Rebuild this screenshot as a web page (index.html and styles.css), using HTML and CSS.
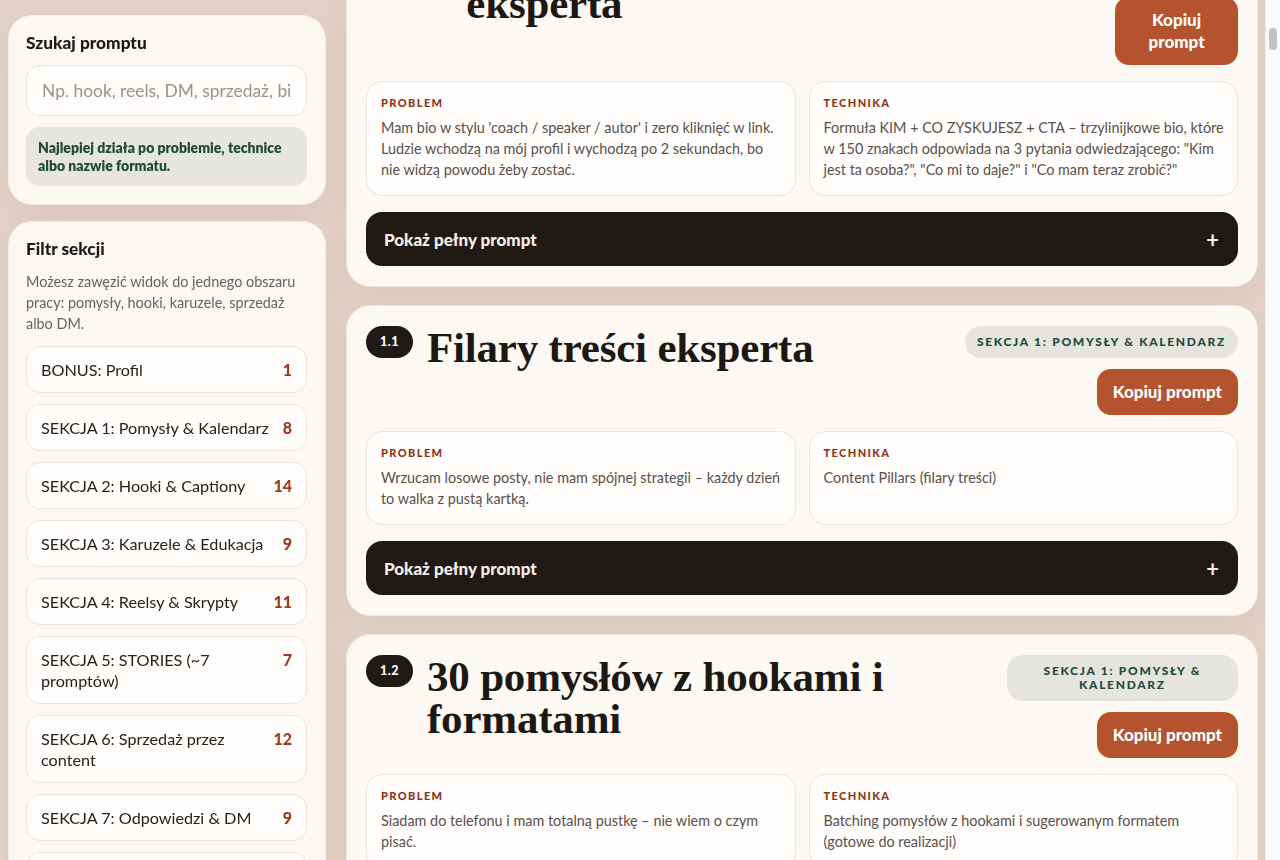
FILE: index.html
```html
<!DOCTYPE html>
<html lang="pl">
<head>
    <meta charset="UTF-8">
    <meta name="viewport" content="width=device-width, initial-scale=1.0">
    <title>Biblioteka promptów – Instagram eksperta</title>
    <link rel="stylesheet" href="styles.css">
</head>
<body>
    <div class="page" id="page">
        <div class="layout">
            <aside class="sidebar">
                <section class="panel">
                    <h3 class="panel-title">Szukaj promptu</h3>
                    <input class="search" type="text" placeholder="Np. hook, reels, DM, sprzedaż, bio">
                    <p class="hint">Najlepiej działa po problemie, technice albo nazwie formatu.</p>
                </section>

                <section class="panel">
                    <h3 class="panel-title">Filtr sekcji</h3>
                    <p class="panel-desc">Możesz zawęzić widok do jednego obszaru pracy: pomysły, hooki, karuzele, sprzedaż albo DM.</p>
                    <ul class="filters">
                        <li class="filter"><span>BONUS: Profil</span><b>1</b></li>
                        <li class="filter"><span>SEKCJA 1: Pomysły &amp; Kalendarz</span><b>8</b></li>
                        <li class="filter"><span>SEKCJA 2: Hooki &amp; Captiony</span><b>14</b></li>
                        <li class="filter"><span>SEKCJA 3: Karuzele &amp; Edukacja</span><b>9</b></li>
                        <li class="filter"><span>SEKCJA 4: Reelsy &amp; Skrypty</span><b>11</b></li>
                        <li class="filter"><span>SEKCJA 5: STORIES (~7 promptów)</span><b>7</b></li>
                        <li class="filter"><span>SEKCJA 6: Sprzedaż przez content</span><b>12</b></li>
                        <li class="filter"><span>SEKCJA 7: Odpowiedzi &amp; DM</span><b>9</b></li>
                        <li class="filter"><span>SEKCJA 8: Analiza &amp; Statystyki</span><b>6</b></li>
                    </ul>
                </section>
            </aside>

            <main class="prompts">
                <article class="prompt" id="prompt-bonus">
                    <header class="prompt-head">
                        <span class="prompt-no prompt-no-wide">BONUS</span>
                        <h2 class="prompt-title">Bio, które w sekundę pokazuje eksperta</h2>
                        <div class="prompt-meta">
                            <span class="tag">Bonus: Profil</span>
                            <button class="copy">Kopiuj prompt</button>
                        </div>
                    </header>
                    <div class="prompt-info">
                        <div class="info-box">
                            <h4 class="info-label">Problem</h4>
                            <p>Mam bio w stylu 'coach / speaker / autor' i zero kliknięć w link. Ludzie wchodzą na mój profil i wychodzą po 2 sekundach, bo nie widzą powodu żeby zostać.</p>
                        </div>
                        <div class="info-box">
                            <h4 class="info-label">Technika</h4>
                            <p>Formuła KIM + CO ZYSKUJESZ + CTA – trzylinijkowe bio, które w 150 znakach odpowiada na 3 pytania odwiedzającego: "Kim jest ta osoba?", "Co mi to daje?" i "Co mam teraz zrobić?"</p>
                        </div>
                    </div>
                    <button class="toggle"><span>Pokaż pełny prompt</span><span class="plus">+</span></button>
                </article>

                <article class="prompt" id="prompt-1-1">
                    <header class="prompt-head">
                        <span class="prompt-no">1.1</span>
                        <h2 class="prompt-title">Filary treści eksperta</h2>
                        <div class="prompt-meta">
                            <span class="tag">Sekcja 1: Pomysły &amp; Kalendarz</span>
                            <button class="copy">Kopiuj prompt</button>
                        </div>
                    </header>
                    <div class="prompt-info">
                        <div class="info-box">
                            <h4 class="info-label">Problem</h4>
                            <p>Wrzucam losowe posty, nie mam spójnej strategii – każdy dzień to walka z pustą kartką.</p>
                        </div>
                        <div class="info-box">
                            <h4 class="info-label">Technika</h4>
                            <p>Content Pillars (filary treści)</p>
                        </div>
                    </div>
                    <button class="toggle"><span>Pokaż pełny prompt</span><span class="plus">+</span></button>
                </article>

                <article class="prompt" id="prompt-1-2">
                    <header class="prompt-head">
                        <span class="prompt-no">1.2</span>
                        <h2 class="prompt-title">30 pomysłów z hookami i formatami</h2>
                        <div class="prompt-meta">
                            <span class="tag">Sekcja 1: Pomysły &amp; Kalendarz</span>
                            <button class="copy">Kopiuj prompt</button>
                        </div>
                    </header>
                    <div class="prompt-info">
                        <div class="info-box">
                            <h4 class="info-label">Problem</h4>
                            <p>Siadam do telefonu i mam totalną pustkę – nie wiem o czym pisać.</p>
                        </div>
                        <div class="info-box">
                            <h4 class="info-label">Technika</h4>
                            <p>Batching pomysłów z hookami i sugerowanym formatem (gotowe do realizacji)</p>
                        </div>
                    </div>
                    <button class="toggle"><span>Pokaż pełny prompt</span><span class="plus">+</span></button>
                </article>

                <article class="prompt" id="prompt-1-3">
                    <header class="prompt-head">
                        <span class="prompt-no">1.3</span>
                        <h2 class="prompt-title">Kalendarz publikacji na 30 dni</h2>
                        <div class="prompt-meta">
                            <span class="tag">Sekcja 1: Pomysły &amp; Kalendarz</span>
                            <button class="copy">Kopiuj prompt</button>
                        </div>
                    </header>
                    <div class="prompt-info">
                        <div class="info-box">
                            <h4 class="info-label">Problem</h4>
                            <p>Mam pomysły, ale publikuję zrywami – tydzień codziennie, potem dwa tygodnie ciszy.</p>
                        </div>
                        <div class="info-box">
                            <h4 class="info-label">Technika</h4>
                            <p>Rytm tygodniowy: edukacja, historia, dowód, sprzedaż</p>
                        </div>
                    </div>
                    <button class="toggle"><span>Pokaż pełny prompt</span><span class="plus">+</span></button>
                </article>
            </main>
        </div>
    </div>

    <div class="scrollbar"><div class="scrollbar-thumb"></div></div>

    <script src="script.js"></script>
</body>
</html>
```

FILE: styles.css
```css
* {
    box-sizing: border-box;
    margin: 0;
    padding: 0;
}

html,
body {
    height: 100%;
    overflow: hidden;
    background: #e4d2c6;
}

body {
    display: flex;
    font-family: Lato, "Noto Sans", sans-serif;
    color: #241c17;
}

/* cała strona przewija się w tym kontenerze */
.page {
    flex: 1;
    height: 100vh;
    overflow-y: auto;
    scrollbar-width: none;
}
.page::-webkit-scrollbar {
    display: none;
}

.scrollbar {
    flex: none;
    width: 15px;
    height: 100vh;
    background: #fafafa;
    border-left: 1px solid #ececec;
}
.scrollbar-thumb {
    width: 8px;
    height: 22px;
    margin: 28px 0 0 3px;
    border-radius: 4px;
    background: #c1c1c1;
}

.layout {
    display: grid;
    grid-template-columns: 318px 1fr;
    gap: 20px;
    align-items: start;
    padding: 15px 7px 40px 8px;
}

/* lewa kolumna: wyszukiwarka + filtr */
.sidebar {
    position: sticky;
    top: 15px;
    display: flex;
    flex-direction: column;
    gap: 16px;
}

.panel {
    background: #fbf7f2;
    border: 1px solid #f3ebe4;
    border-radius: 24px;
    padding: 17px 18px 18px 17px;
    box-shadow: 0 10px 30px rgba(120, 80, 60, 0.08);
}

.panel-title {
    font-size: 17.3px;
    line-height: 20px;
    font-weight: 900;
    color: #1f1813;
}

.search {
    display: block;
    width: 100%;
    height: 51px;
    margin-top: 12px;
    padding: 0 15px;
    border: 1px solid #ebe2da;
    border-radius: 14px;
    background: #fffdfb;
    font-family: inherit;
    font-size: 17.4px;
    color: #241c17;
    outline: none;
}
.search::placeholder {
    color: #9b918a;
}

.hint {
    margin-top: 11px;
    padding: 11.5px 12px;
    background: #e7e5e0;
    border-radius: 14px;
    font-size: 14px;
    line-height: 18px;
    font-weight: 800;
    color: #1f4a3e;
}

.panel-desc {
    margin-top: 12px;
    font-size: 14.4px;
    line-height: 21px;
    color: #6d625b;
}

.filters {
    list-style: none;
    margin-top: 12px;
    display: flex;
    flex-direction: column;
    gap: 11px;
}

.filter {
    display: flex;
    justify-content: space-between;
    align-items: flex-start;
    gap: 8px;
    padding: 12px 14px;
    background: #fffdfb;
    border: 1px solid #ece3dc;
    border-radius: 14px;
    font-size: 16.2px;
    line-height: 21px;
    color: #2a211c;
}
.filter b {
    font-weight: 900;
    font-size: 16px;
    color: #9b3a1d;
}

/* prawa kolumna: karty promptów */
.prompts {
    display: flex;
    flex-direction: column;
    gap: 18px;
}

.prompt {
    background: #fcf8f3;
    border: 1px solid #f1e6dc;
    border-radius: 24px;
    padding: 20px 19px;
    box-shadow: 0 10px 30px rgba(120, 80, 60, 0.08);
}

.prompt-head {
    display: flex;
    align-items: flex-start;
    gap: 14px;
}

.prompt-no {
    flex: none;
    height: 32px;
    padding: 0 14px;
    border-radius: 16px;
    background: #201a17;
    color: #fff;
    font-size: 12.5px;
    line-height: 32px;
    font-weight: 900;
    letter-spacing: 0.5px;
}
.prompt-no-wide {
    letter-spacing: 2.8px;
}

.prompt-title {
    flex: 1 1 auto;
    font-family: "Liberation Serif", "DejaVu Serif", serif;
    font-size: 43px;
    line-height: 42px;
    font-weight: 700;
    color: #1e1814;
    letter-spacing: -0.2px;
    padding-top: 1px;
}

.prompt-meta {
    display: flex;
    flex-direction: column;
    align-items: flex-end;
    gap: 11px;
    margin-left: 6px;
}

.tag {
    padding: 9px 12px;
    border-radius: 16px;
    background: #e6e4df;
    color: #1f4a3e;
    font-size: 12px;
    line-height: 14px;
    font-weight: 900;
    letter-spacing: 1.7px;
    text-transform: uppercase;
    text-align: center;
}

.copy {
    padding: 12px 16px;
    border: none;
    border-radius: 14px;
    background: #b5532f;
    color: #fff;
    font-family: inherit;
    font-size: 17px;
    line-height: 22px;
    font-weight: 900;
    text-align: center;
}

.prompt-info {
    display: grid;
    grid-template-columns: 1fr 1fr;
    gap: 13px;
    margin-top: 16px;
}

.info-box {
    padding: 14px 12px 15px 14px;
    background: #fffdfb;
    border: 1px solid #ece4dc;
    border-radius: 16px;
}

.info-label {
    font-size: 11px;
    line-height: 14px;
    font-weight: 900;
    letter-spacing: 1.4px;
    text-transform: uppercase;
    color: #8e3516;
}

.info-box p {
    margin-top: 7px;
    font-size: 14.4px;
    line-height: 21px;
    color: #5b504a;
}

.toggle {
    display: flex;
    justify-content: space-between;
    align-items: center;
    width: 100%;
    height: 54px;
    margin-top: 16px;
    padding: 0 19px 0 18px;
    border: none;
    border-radius: 16px;
    background: #201a17;
    color: #f8f0e8;
    font-family: inherit;
    font-size: 17px;
    font-weight: 900;
}
.toggle .plus {
    font-size: 22px;
    font-weight: 700;
}
```

FILE: script.js
```js
var page = document.getElementById('page');
var last = document.getElementById('prompt-1-1');
var offset = last.getBoundingClientRect().top - page.getBoundingClientRect().top;
page.scrollTop = page.scrollTop + offset - 305;
```
